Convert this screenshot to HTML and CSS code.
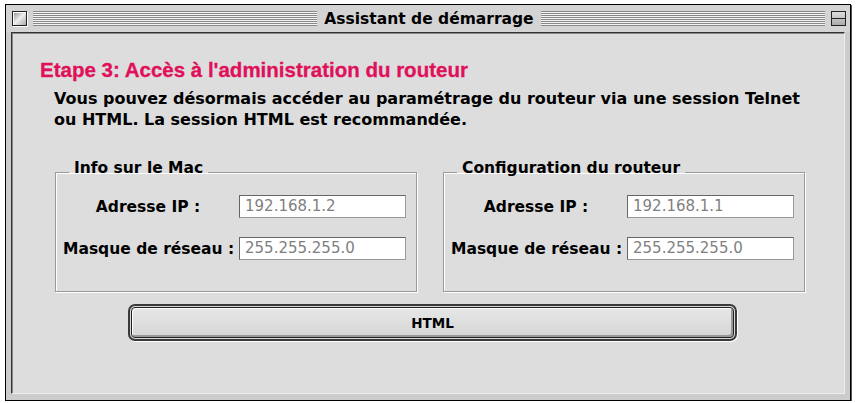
FILE: index.html
```html
<!DOCTYPE html>
<html lang="fr">
<head>
<meta charset="utf-8">
<title>Assistant de démarrage</title>
<link rel="stylesheet" href="styles.css">
</head>
<body>
<div class="window">
  <div class="titlebar">
    <span class="closebox"></span>
    <span class="stripes"></span>
    <span class="title">Assistant de démarrage</span>
    <span class="stripes"></span>
    <span class="zoombox"><span class="zoomline"></span></span>
  </div>
  <div class="content">
    <h1 class="heading">Etape 3: Accès à l'administration du routeur</h1>
    <p class="intro">Vous pouvez désormais accéder au paramétrage du routeur via une session Telnet<br>ou HTML. La session HTML est recommandée.</p>
    <div class="groups">
      <fieldset class="group">
        <legend>Info sur le Mac</legend>
        <div class="row">
          <span class="label">Adresse IP :</span>
          <span class="field">192.168.1.2</span>
        </div>
        <div class="row">
          <span class="label">Masque de réseau :</span>
          <span class="field">255.255.255.0</span>
        </div>
      </fieldset>
      <fieldset class="group">
        <legend>Configuration du routeur</legend>
        <div class="row">
          <span class="label">Adresse IP :</span>
          <span class="field">192.168.1.1</span>
        </div>
        <div class="row">
          <span class="label">Masque de réseau :</span>
          <span class="field">255.255.255.0</span>
        </div>
      </fieldset>
    </div>
    <div class="button-row">
      <button class="btn" type="button"><span class="btn-face">HTML</span></button>
    </div>
  </div>
</div>
</body>
</html>
```
FILE: styles.css
```css
html, body {
  margin: 0;
  padding: 0;
  background: #ffffff;
}
body {
  font-family: "DejaVu Sans", "Liberation Sans", sans-serif;
  font-weight: bold;
  color: #000;
}
.window {
  margin: 4px 0 0 5px;
  width: 844px;
  height: 395px;
  border: 1px solid #000;
  background: #cccccc;
  box-shadow: 1px 1px 0 #555;
  display: flex;
  flex-direction: column;
}
.titlebar {
  height: 27px;
  display: flex;
  align-items: center;
  padding: 0 4px 0 6px;
  gap: 6px;
  background: #d4d4d4;
}
.closebox {
  width: 13px;
  height: 13px;
  border: 1px solid #222;
  background: linear-gradient(135deg, #888 0%, #eee 50%, #aaa 100%);
  box-shadow: inset 1px 1px 0 #fff, 1px 1px 0 #fff;
  flex: none;
}
.stripes {
  flex: 1;
  height: 15px;
  background: repeating-linear-gradient(to bottom, #888 0 1px, #f4f4f4 1px 2px);
}
.title {
  font-size: 15.5px;
  font-weight: bold;
  padding: 0 1px;
  white-space: nowrap;
}
.zoombox {
  width: 13px;
  height: 13px;
  border: 1px solid #222;
  background: linear-gradient(#ddd, #aaa);
  flex: none;
  display: flex;
  align-items: center;
}
.zoomline {
  display: block;
  width: 100%;
  height: 1px;
  background: #222;
}
.content {
  flex: 1;
  margin: 0 5px 6px 5px;
  border: 1px solid #333;
  border-right-color: #eee;
  border-bottom-color: #eee;
  box-shadow: inset 1px 1px 0 #888;
  background: #dddddd;
  padding: 0 0 0 28px;
  display: flex;
  flex-direction: column;
}
.heading {
  margin: 25px 0 0 0;
  font-family: "Liberation Sans", Arial, sans-serif;
  font-size: 20.5px;
  font-weight: bold;
  color: #e0105a;
  -webkit-text-stroke: 0.3px #e0105a;
  line-height: 24px;
}
.intro {
  margin: 6px 0 0 14px;
  font-size: 16px;
  line-height: 21px;
}
.groups {
  display: flex;
  gap: 26px;
  margin: 31px 0 0 15px;
}
.group {
  margin: 0;
  width: 362px;
  box-sizing: border-box;
  padding: 12px 0 31px 7px;
  border: 1px solid #999;
  box-shadow: 1px 1px 0 #fff, inset 1px 1px 0 #fff;
  display: flex;
  flex-direction: column;
  gap: 19px;
}
.group legend {
  font-size: 15.5px;
  line-height: 14px;
  padding: 0 5px 8px 5px;
  margin-left: 6px;
}
.row {
  display: flex;
  align-items: center;
  gap: 6px;
}
.label {
  font-size: 15.5px;
  width: 170px;
  text-align: center;
  white-space: nowrap;
}
.field {
  width: 167px;
  height: 23px;
  box-sizing: border-box;
  border: 1px solid #666;
  border-right-color: #999;
  border-bottom-color: #999;
  background: #fff;
  color: #7f7f7f;
  font-weight: normal;
  font-size: 15px;
  line-height: 21px;
  padding-left: 5px;
}
.button-row {
  display: flex;
  margin: 12px 0 0 88px;
}
.btn {
  width: 609px;
  height: 37px;
  border: 2px solid #3a3a3a;
  border-radius: 7px;
  background: #d8d8d8;
  padding: 1px;
  box-shadow: 1px 1px 0 #fff;
  display: flex;
}
.btn-face {
  flex: 1;
  display: flex;
  align-items: center;
  justify-content: center;
  border: 1px solid #222;
  border-radius: 4px;
  background: linear-gradient(#e6e6e6, #d6d6d6);
  box-shadow: inset 1px 1px 0 #fff, inset -2px -2px 0 #999;
  font-family: "DejaVu Sans", "Liberation Sans", sans-serif;
  font-weight: bold;
  font-size: 13.5px;
  color: #000;
}
```
